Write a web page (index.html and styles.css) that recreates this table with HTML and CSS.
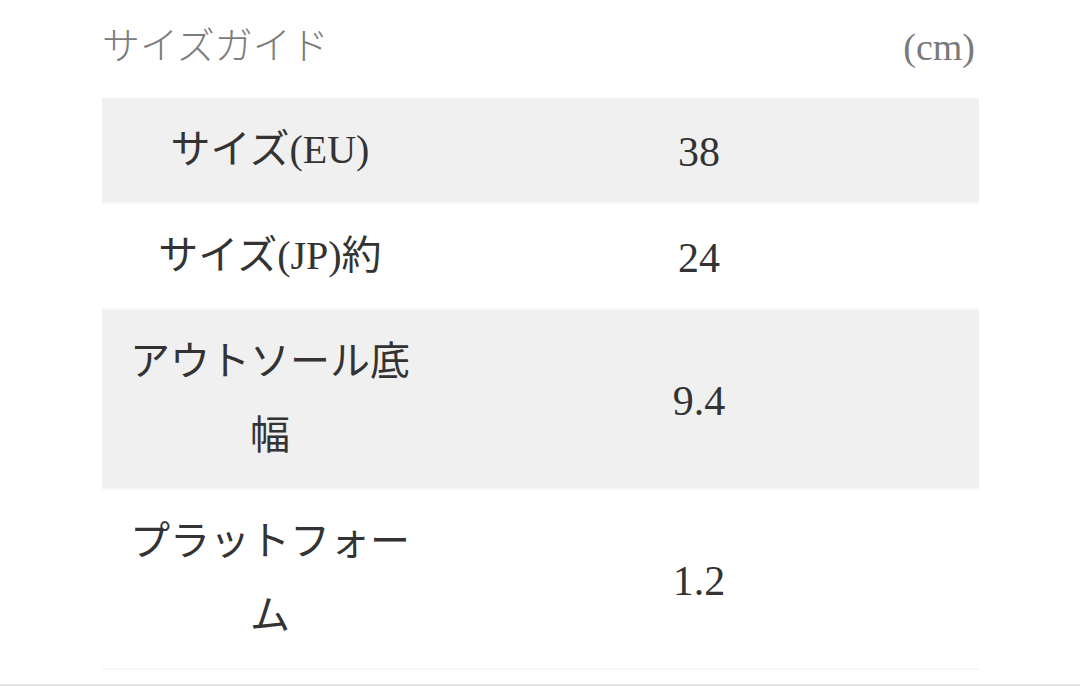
FILE: index.html
```html
<!DOCTYPE html>
<html lang="ja">
<head>
<meta charset="utf-8">
<link rel="stylesheet" href="styles.css">
</head>
<body>
<div class="guide">
  <div class="head">
    <span class="title">サイズガイド</span>
    <span class="unit">(cm)</span>
  </div>
  <table class="sizes">
    <tr class="odd"><td class="label">サイズ(EU)</td><td class="val">38</td></tr>
    <tr><td class="label">サイズ(JP)約</td><td class="val">24</td></tr>
    <tr class="odd"><td class="label">アウトソール底幅</td><td class="val">9.4</td></tr>
    <tr><td class="label">プラットフォーム</td><td class="val">1.2</td></tr>
  </table>
</div>
<div class="rule"></div>
</body>
</html>
```
FILE: styles.css
```css
html, body {
  margin: 0;
  padding: 0;
  background: #fff;
}
body {
  font-family: "Liberation Serif", "Noto Sans CJK JP", serif;
  color: #333;
}
.guide {
  padding: 0 101px 0 102px;
}
.head {
  height: 98px;
  display: flex;
  justify-content: space-between;
  align-items: flex-start;
}
.title {
  font-family: "Noto Sans CJK JP", sans-serif;
  font-weight: 300;
  font-size: 38px;
  color: #7c7c7c;
  line-height: 40px;
  padding-top: 23px;
}
.unit {
  font-size: 38px;
  color: #7a7a7a;
  line-height: 40px;
  padding-top: 27px;
  padding-right: 4px;
}
.sizes {
  width: 100%;
  border-collapse: collapse;
  table-layout: fixed;
}
.sizes tr {
  border-bottom: 2px solid #f7f7f7;
}
.sizes tr.odd {
  background: #f0f0f0;
}
.label {
  width: 280px;
  padding: 15px 9px 15px 28px;
  text-align: center;
  font-family: "Liberation Serif", "Noto Sans CJK JP", serif;
  font-size: 40px;
  line-height: 74px;
  color: #333;
}
.val {
  padding: 17px 0 13px;
  text-align: center;
  font-size: 42px;
  line-height: 74px;
  color: #333;
}
.rule {
  margin-top: 14px;
  border-top: 2px solid #e2e2e2;
}
```
